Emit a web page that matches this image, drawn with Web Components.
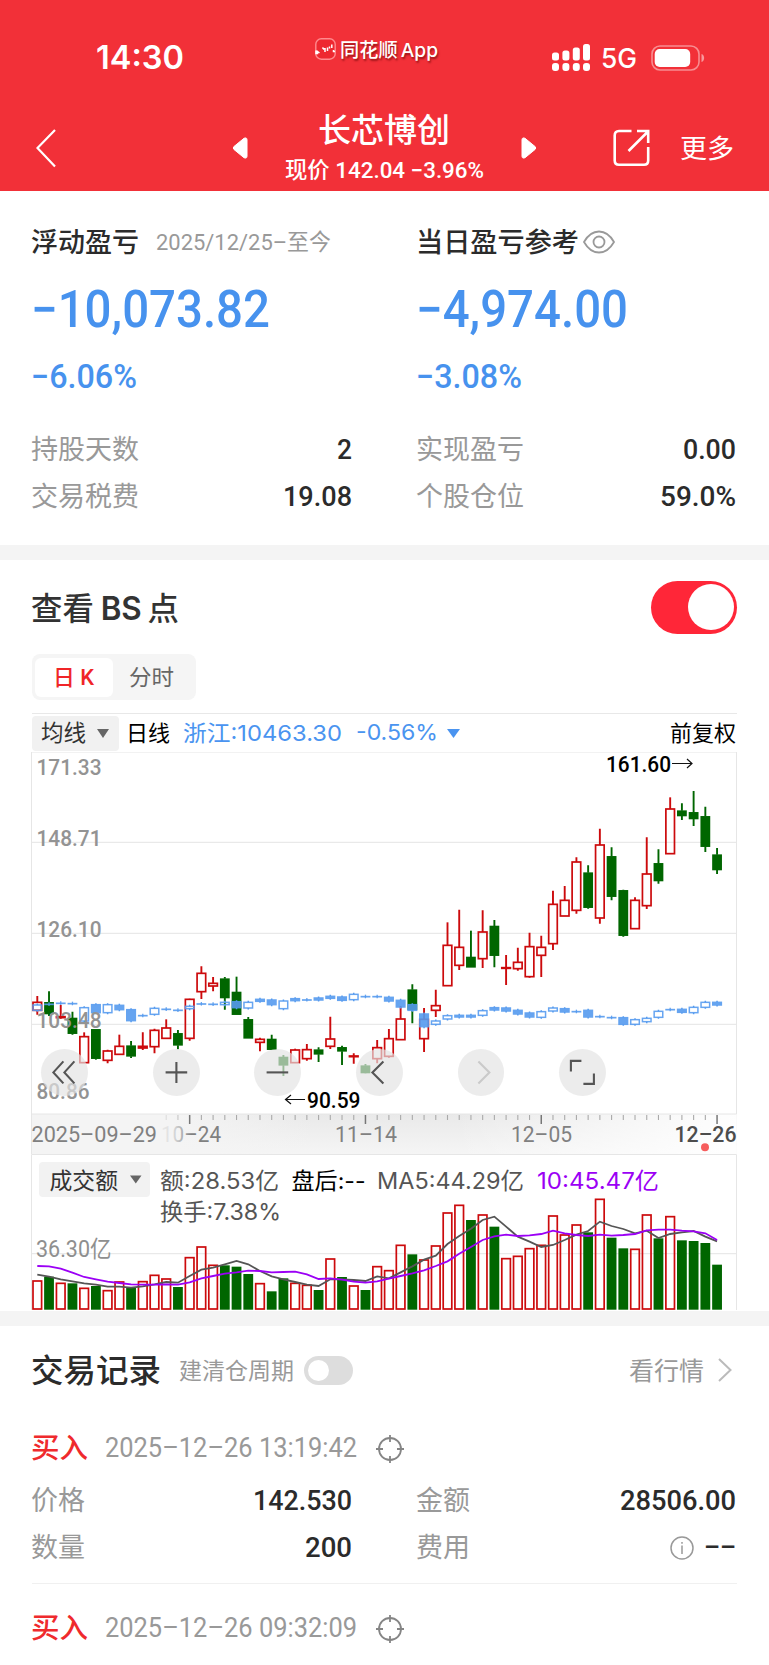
<!DOCTYPE html>
<html lang="zh-CN">
<head>
<meta charset="utf-8">
<title>长芯博创</title>
<style>
html,body{margin:0;padding:0}
body{width:769px;height:1665px;overflow:hidden;background:#fff;font-family:Roboto,"Noto Sans CJK SC",sans-serif;color:#2b2b2b}
.band{height:15px;background:#f4f4f4}
</style>
</head>
<body>
<app-header></app-header>
<profit-panel></profit-panel>
<div class="band"></div>
<chart-panel></chart-panel>
<div class="band"></div>
<trade-list></trade-list>

<script>
const define = (name, html, extra) => {
  const t = document.createElement('template');
  customElements.define(name, class extends HTMLElement {
    connectedCallback() {
      if (this.shadowRoot) return;
      this.attachShadow({mode: 'open'});
      t.innerHTML = typeof html === 'function' ? html(this) : html;
      this.shadowRoot.append(t.content.cloneNode(true));
      if (extra) extra(this);
    }
  });
};

/* One line of text stretched to a given width; Chinese glyphs sit slightly lower on the line */
define('fit-text', `<style>:host{display:block;flex:none;line-height:1;white-space:nowrap}
span{display:inline-block;transform-origin:0 50%;line-height:1}</style><span><slot></slot></span>`, el => {
  const w = +el.getAttribute('w'), s = el.shadowRoot.querySelector('span');
  el.style.width = w + 'px';
  el.style.fontSize = el.getAttribute('size') + 'px';
  if (el.hasAttribute('weight')) el.style.fontWeight = el.getAttribute('weight');
  if (el.hasAttribute('color')) el.style.color = el.getAttribute('color');
  const n = s.getBoundingClientRect().width;
  const dy = /^[\u4e00-\u9fff]/.test(el.textContent) ? 1 : 0;
  if (n) s.style.transform = `translate(-1px,${dy}px) scaleX(${w / n})`;
});

define('toggle-switch', el => {
  const on = el.hasAttribute('on');
  return `<style>:host{display:flex;align-items:center;box-sizing:border-box;flex:none;
  ${on ? 'width:86px;height:53px;border-radius:27px;background:#ff2638;justify-content:flex-end;padding:0 3px'
       : 'width:49px;height:29px;border-radius:15px;background:#ddd;padding:0 4px'}}
  i{display:block;background:#fff;border-radius:50%;width:${on ? 46 : 21}px;height:${on ? 46 : 21}px}</style><i></i>`;
});

define('stat-row', `<style>:host{display:flex;align-items:center;justify-content:space-between;height:47px}
div{display:flex;align-items:center}</style><slot name="label"></slot><div><slot></slot></div>`);

define('app-header', `<style>
:host{display:block;height:191px;background:#f23038;color:#fff}
.status{display:flex;height:96px;align-items:center;padding-left:97px;box-sizing:border-box;padding-top:20px}
.brand{display:flex;align-items:center;margin-left:130px;gap:5px;position:relative;top:-9px;text-shadow:1px 2px 2px rgba(90,0,0,.6)}
.sys{display:flex;align-items:center;margin-left:113px}
.nav{display:flex;height:95px;align-items:center}
svg{display:block;flex:none}
.mid{display:flex;flex-direction:column;align-items:center;width:200px}
</style>
<div class="status">
 <fit-text w="88" size="32.5" weight="600" style="font-family:Inter">14:30</fit-text>
 <div class="brand"><svg width="21" height="22" viewBox="0 0 21 22"><rect x=".8" y=".8" width="19.4" height="20.4" rx="5.5" fill="#ee2830" stroke="#ff8a8e" stroke-width="1.4"/><path d="M1 12.500v3h1.500v-2l2 1.500M7.500 9.500l1.500 2M10 10v4M12.500 9.500v3.500M14.500 8.500v2M16.800 6.500v3.500M18.500 12v1.500h1.500" fill="none" stroke="#fff" stroke-width="1.500"/></svg>
 <fit-text w="98" size="19" weight="500" style="font-family:Inter,'Noto Sans CJK SC',sans-serif;word-spacing:-2px">同花顺 App</fit-text></div>
 <div class="sys">
  <svg width="38" height="28" viewBox="0 0 38 28" fill="#fff"><rect x="0" y="8.500" width="7" height="8" rx="2.500"/><rect x="10.400" y="6.500" width="7" height="10" rx="2.500"/><rect x="20.800" y="3.500" width="7" height="13" rx="2.500"/><rect x="31" y="0" width="7" height="16.500" rx="2.500"/><rect x="0" y="19" width="7" height="8" rx="3"/><rect x="10.400" y="19" width="7" height="8" rx="3"/><rect x="20.800" y="19" width="7" height="8" rx="3"/><rect x="31" y="19" width="7" height="8" rx="3"/></svg>
  <fit-text w="36" size="27" weight="500" style="font-family:Inter;margin:1px 13px 0 12px">5G</fit-text>
  <svg width="54" height="26" viewBox="0 0 54 26"><rect x="1" y="1" width="47" height="24" rx="8" fill="none" stroke="#fff" stroke-opacity=".45" stroke-width="1.600"/><rect x="3.700" y="4" width="35.500" height="18" rx="5" fill="#fff"/><path d="M50.500 9c3.500 1 3.500 7 0 8z" fill="#fff" opacity=".5"/></svg>
 </div>
</div>
<div class="nav">
 <svg style="margin:8px 0 0 36px" width="20" height="40" viewBox="0 0 20 40"><path d="M19 2L1.500 20L19 38.500" fill="none" stroke="#fff" stroke-width="2.200"/></svg>
 <svg style="margin:9px 0 0 176px" width="17" height="24" viewBox="0 0 17 24"><path d="M2 10.500L12 2.300Q15 1 15 4v16q0 3-3 1.700L2 13.500Q.5 12 2 10.500z" fill="#fff" stroke="#fff"/></svg>
 <div class="mid" style="margin:6px 0 0 36px">
  <fit-text w="132" size="33" weight="500">长芯博创</fit-text>
  <fit-text w="199" size="22.500" weight="500" style="margin-top:12px">现价 142.04 −3.96%</fit-text>
 </div>
 <svg style="margin:9px 0 0 35px" width="17" height="24" viewBox="0 0 17 24"><path transform="matrix(-1 0 0 1 17 0)" d="M2 10.500L12 2.300Q15 1 15 4v16q0 3-3 1.700L2 13.500Q.5 12 2 10.500z" fill="#fff" stroke="#fff"/></svg>
 <svg style="margin:9px 0 0 76px" width="37" height="38" viewBox="0 0 37 38"><path d="M18.500 2H6Q1.700 2 1.700 6.500v25Q1.700 35.700 6 35.700h25q4.200 0 4.200-4.200V18M24 2h11.200v12M35 2.500L15.500 22" fill="none" stroke="#fff" stroke-width="2.600"/></svg>
 <fit-text w="54" size="26.500" style="margin:10px 0 0 31px">更多</fit-text>
</div>`);

define('profit-panel', `<style>
:host{display:grid;grid-template-columns:321px 320px;column-gap:64px;padding:29px 0 25px 32px;height:354px;box-sizing:border-box}
.h{display:flex;height:44px;align-items:center}.b{display:flex;height:89px;align-items:center;padding-top:2px;box-sizing:border-box}.p{display:flex;height:46px;align-items:center;margin-bottom:27px}
svg{margin-left:3px}
</style>
<div><div class="h"><fit-text w="108" size="27" weight="500">浮动盈亏</fit-text><fit-text w="175" size="22.500" color="#999" style="margin-left:17px">2025/12/25–至今</fit-text></div>
<div class="b"><fit-text w="239" size="51" weight="500" color="#4792ee">−10,073.82</fit-text></div>
<div class="p"><fit-text w="106" size="33" weight="500" color="#4792ee">−6.06%</fit-text></div>
<stat-row><fit-text slot="label" w="108" size="27" color="#999">持股天数</fit-text><fit-text w="15" size="28" weight="500">2</fit-text></stat-row>
<stat-row><fit-text slot="label" w="108" size="27" color="#999">交易税费</fit-text><fit-text w="69" size="28" weight="500">19.08</fit-text></stat-row></div>
<div><div class="h"><fit-text w="163" size="27" weight="500">当日盈亏参考</fit-text><svg width="32" height="24" viewBox="0 0 32 24" fill="none" stroke="#999" stroke-width="1.800"><path d="M1 12Q7 1.500 16 1.500T31 12Q25 22.500 16 22.500T1 12z"/><circle cx="16" cy="12" r="5.500"/></svg></div>
<div class="b"><fit-text w="212" size="51" weight="500" color="#4792ee">−4,974.00</fit-text></div>
<div class="p"><fit-text w="106" size="33" weight="500" color="#4792ee">−3.08%</fit-text></div>
<stat-row><fit-text slot="label" w="108" size="27" color="#999">实现盈亏</fit-text><fit-text w="53" size="28" weight="500">0.00</fit-text></stat-row>
<stat-row><fit-text slot="label" w="108" size="27" color="#999">个股仓位</fit-text><fit-text w="76" size="28" weight="500">59.0%</fit-text></stat-row></div>`);

/* Candle table: colour, high, body top, body bottom, low (thirds of a pixel below y=740) */
const K = `r768,787,811,824 g754,787,822,828 r795,830,833,836 g815,834,881,884 r877,890,968,968 g868,868,956,959 r929,933,961,970 r884,919,943,943 g903,917,949,954 r877,919,924,930 r866,871,920,940 r838,864,895,895 g870,880,916,928 r776,778,895,902 r679,700,755,777 r711,730,738,754 g711,716,774,809 g710,756,824,824 g831,838,895,895 r893,898,907,934 g884,897,929,930 g945,951,976,1008 r926,930,968,968 r912,929,956,962 g922,929,943,966 r830,897,919,927 g917,922,934,975 r940,948,950,971 g972,977,999,1000 r900,923,956,970 r867,896,949,953 r798,837,899,899 g733,749,809,850 r804,838,896,936 r749,797,811,831 r547,616,737,737 r509,622,676,690 g572,651,682,682 r511,576,656,684 g540,558,647,682 r645,683,685,735 r623,667,686,692 r578,620,710,713 r587,622,646,711 r452,493,611,630 r438,481,528,528 r352,366,511,521 g376,398,503,506 r266,315,534,551 g322,349,470,481 g449,451,587,590 r472,481,566,566 r292,402,497,507 g328,370,423,431 r172,207,341,341 g190,212,228,240 g153,217,237,258 g200,229,320,336 g324,344,390,402`.split(' ');
const B = `h795,811 t793 t790 t791 h803,843 f794,818 h794,818 f796,809 f809,842 t827 h805,823 t808 t811 h799,806 t792 t793 h787,794 f785,803 h787,804 f778,784 f780,794 h783,806 f776,782 t780 f774,780 f769,775 f771,781 h763,779 t770 t770 f772,783 f781,801 f794,811 f822,860 h843,853 h827,837 f826,831 f826,831 h812,826 f803,810 f804,813 f811,822 f819,831 h815,832 h804,813 f806,816 t815 f811,831 t830 t833 f833,853 h839,853 h835,845 h814,832 t809 f808,817 h802,818 h787,802 f787,795`.split(' ');
const V = `423,410,430,430,445,438,452,426,443,425,406,417,441,353,321,376,376,380,402,431,454,415,430,436,450,357,411,438,450,380,392,316,343,360,318,219,196,240,225,260,356,349,326,316,228,285,255,277,178,293,325,328,225,295,230,301,303,309,374`.split(',');
const M5 = `404,410,418,424,430,434,440,440,443,439,433,426,428,408,389,383,373,363,373,393,409,418,426,434,438,418,418,420,423,409,415,397,379,359,347,312,288,266,240,230,260,290,305,321,315,300,284,273,245,258,267,280,272,294,282,277,273,290,304`.split(',');
const M10 = `378,379,386,398,411,418,425,429,433,434,434,433,434,427,415,408,401,397,392,393,397,396,395,403,417,415,419,425,428,424,416,408,400,391,378,364,341,321,300,289,284,288,286,282,272,280,285,288,284,287,285,282,271,269,269,272,274,280,300`.split(',');
/* Volume bar colours, one letter a day */
const VC = 'rgrgrgrrgrrrgrrrgggrggrrgrgrgrrrgrrrrgrgrrrrrrrgrggrrgrgggg';
const X = i => 37.3 + 11.72 * i;
const RED = '#cc0a0c', GREEN = '#006600', BLUE = '#569bef';
const T = (x, y, w, s, c, t, wt = 400) => `<text x="${x}" y="${y}" textLength="${w}" lengthAdjust="spacingAndGlyphs" font-size="${s}" fill="${c}" font-weight="${wt}">${t}</text>`;

define('price-chart', () => {
  const Y = z => 740 + z / 3;
  let s = '';
  [842.3, 933.3, 1024.3].forEach(y => s += `<path d="M31 ${y}H737" stroke="#e9e9e9" stroke-width="1.200"/>`);
  K.forEach((k, i) => {
    const c = k[0] === 'r' ? RED : GREEN, [h, a, b, l] = k.slice(1).split(',').map(v => Y(+v)), x = X(i);
    s += `<path d="M${x} ${h}V${a}M${x} ${b}V${l}" stroke="${c}" stroke-width="1.900"/>`;
    s += k[0] === 'r'
      ? `<rect x="${x - 4.3}" y="${a}" width="8.600" height="${Math.max(b - a, .4)}" fill="none" stroke="${c}" stroke-width="1.700"/>`
      : `<rect x="${x - 4.9}" y="${a - .3}" width="9.800" height="${b - a + .6}" fill="${c}"/>`;
  });
  B.forEach((k, i) => {
    const [a, b] = k.slice(1).split(',').map(v => Y(+v)), x = X(i);
    if (k[0] === 't') s += `<path d="M${x - 4.900} ${a}h9.800" stroke="${BLUE}" stroke-width="1.700" opacity=".9"/><path d="M${x} ${a - 2}v3.600" stroke="${BLUE}" stroke-width="1.300" opacity=".9"/>`;
    else s += `<rect x="${x - 4.300}" y="${a}" width="8.600" height="${b - a}" fill="${k[0] === 'f' ? BLUE : 'none'}" stroke="${BLUE}" stroke-width="1.500" opacity=".9"/><path d="M${x} ${a - 1.500}V${a}M${x} ${b}v1.500" stroke="${BLUE}" stroke-width="1.500"/>`;
  });
  [['171.33', 774.5, 65], ['148.71', 845.5, 65], ['126.10', 936.8, 65], ['103.48', 1027.5, 65], ['80.86', 1098.8, 53]].forEach(([t, y, w]) => s += T(36.5, y, w, 22.800, '#939393', t, 500));
  s += T(606, 772, 65, 22.500, '#000', '161.60', 500) + T(307, 1108, 53.500, 22.500, '#000', '90.59', 500);
  s += `<path d="M672 763.500H692M687 759l5 4.500-5 4.500M305 1099.500H285.500M291 1095l-5.500 4.500 5.500 4.500" fill="none" stroke="#111" stroke-width="1.200"/>`;
  s += `<rect x="31.500" y="1114" width="705" height="40" fill="url(#v)"/><rect x="31.500" y="1114" width="705" height="40" fill="url(#h)"/>`;
  for (let i = 11; i < 59; i++) {
    const big = (i - 13) % 15 === 0;
    s += `<path d="M${X(i)} 1115v${big ? 9 : 5}" stroke="${big ? '#777' : '#aaa'}" stroke-width="${big ? 1.500 : 1.100}" opacity="${i === 11 ? .3 : i === 12 ? .6 : 1}"/>`;
  }
  s += T(31.500, 1142, 125.500, 22.800, '#808080', '2025–09–29') + T(161, 1142, 60, 22.800, 'url(#f)', '10–24') + T(335, 1142, 62, 22.800, '#808080', '11–14') + T(511, 1142, 61, 22.800, '#808080', '12–05') + T(674.500, 1142, 62, 22.800, '#4d4d4d', '12–26', 500);
  s += `<circle cx="705" cy="1147.300" r="4" fill="#f65d5d"/><path d="M31.500 1154V752H736.500V1114H31.500" fill="none" stroke="#e6e6e6"/>`;
  const icons = ['M-1 -11L-11 0L-1 11M10 -11L0 0L10 11', 'M-10.800 0H10.800M0 -10.500V10.500', 'M-10.800 0H10.800', 'M4 -11L-7 0L4 11', 'M-3 -11L8 0L-3 11', 'M-11.500 -1V-11.500H-1M11.500 1V11.500H1'];
  return `<style>:host{display:block;position:relative;height:402px;width:769px}svg{display:block}
  nav{position:absolute;left:41px;top:297px;display:flex;gap:54.8px}
  nav i{display:block;width:46.8px;height:46.8px;border-radius:50%;background:rgba(227,227,227,.68)}nav i:first-child{margin-right:10.2px}</style>
  <svg width="769" height="402" viewBox="0 752 769 402"><defs>
  <linearGradient id="v" x2="0" y2="1"><stop stop-color="#e9e9e9"/><stop offset="1" stop-color="#f5f5f5"/></linearGradient>
  <linearGradient id="h"><stop stop-color="#f4f4f4"/><stop offset=".2" stop-color="#f4f4f4"/><stop offset=".4" stop-color="#f4f4f4" stop-opacity="0"/><stop offset=".6" stop-color="#fff" stop-opacity="0"/><stop offset="1" stop-color="#fff" stop-opacity=".95"/></linearGradient>
  <linearGradient id="f"><stop stop-color="#808080" stop-opacity=".1"/><stop offset=".2" stop-color="#808080" stop-opacity=".2"/><stop offset=".4" stop-color="#808080" stop-opacity=".7"/><stop offset=".5" stop-color="#808080"/></linearGradient></defs>${s}</svg>
  <nav>${icons.map((d, i) => `<i><svg width="46.800" height="46.800" viewBox="-23.400 -23.400 46.800 46.800"><path d="${d}" fill="none" stroke="${i === 4 ? '#cacaca' : '#555'}" stroke-width="2.100"/></svg></i>`).join('')}</nav>`;
});

define('volume-chart', () => {
  const Y = z => 1140 + z / 3;
  let s = `<path d="M31 1253.700H737" stroke="#e9e9e9" stroke-width="1.200"/><path d="M31.500 1310V1154.500H736.500V1310" fill="none" stroke="#e6e6e6"/>`;
  V.forEach((z, i) => {
    const y = Y(+z), x = X(i);
    s += VC[i] === 'r' ? `<rect x="${x - 4.300}" y="${y}" width="8.600" height="${1309 - y}" fill="none" stroke="${RED}" stroke-width="1.700"/>`
      : `<rect x="${x - 4.900}" y="${y}" width="9.800" height="${1309.700 - y}" fill="${GREEN}"/>`;
  });
  [[M5, '#555'], [M10, '#9b00f5']].forEach(([m, c]) => s += `<polyline points="${m.map((z, i) => X(i) + ',' + Y(+z)).join(' ')}" fill="none" stroke="${c}" stroke-width="1.800"/>`);
  s += T(36, 1257, 75.500, 23, '#8f8f8f', '36.30亿');
  s += `<rect x="39" y="1162" width="111" height="35" rx="4" fill="#f2f2f2"/><path d="M130 1175.500h11.500l-5.700 8z" fill="#666"/>`;
  s += T(49.500, 1189, 68.500, 22.500, '#333', '成交额');
  s += `<g style="font-family:Inter,'Noto Sans CJK SC',sans-serif">` + T(160, 1189, 119, 22.500, '#555', '额:28.53亿') + T(291.500, 1189, 74, 22.500, '#000', '盘后:--') + T(377, 1189, 147, 22.500, '#555', 'MA5:44.29亿') + T(537, 1189, 122, 22.500, '#9b00f5', '10:45.47亿') + T(160, 1220, 121, 22.500, '#555', '换手:7.38%') + '</g>';
  return `<style>:host{display:block;height:157px}svg{display:block}</style><svg width="769" height="157" viewBox="0 1154 769 157">${s}</svg>`;
});

define('chart-panel', `<style>
:host{display:block;height:751px}
.head{display:flex;align-items:center;justify-content:space-between;height:94px;padding:0 32px}
.head b{font-weight:600;margin:0 6px 0 7px}
.tabs{display:flex;width:164px;height:46px;margin:0 0 13px 32px;background:#f5f5f5;border-radius:8px;align-items:center;box-sizing:border-box;padding:0 3px}
.tabs div{width:78px;height:39px;background:#fff;border-radius:6px;display:flex;align-items:center;justify-content:center;margin-right:17px}
.bar{display:flex;align-items:center;height:38px;margin:0 32px 0 31.5px;border-top:1px solid #e8e8e8;font-family:Inter,"Noto Sans CJK SC",sans-serif}
.bar fit-text{position:relative;top:-1px}
.ma{display:flex;align-items:center;width:87px;height:35px;box-sizing:border-box;padding-left:10px;background:#f1f1f1;border-radius:4px}
</style>
<div class="head"><fit-text w="148" size="32" weight="500" color="#333" style="padding-top:1px;font-family:Inter,'Noto Sans CJK SC',sans-serif">查看<b>BS</b>点</fit-text><toggle-switch on></toggle-switch></div>
<div class="tabs"><div><fit-text w="41" size="22" weight="500" color="#f02528">日 K</fit-text></div><fit-text w="45" size="22" color="#666">分时</fit-text></div>
<div class="bar"><div class="ma"><fit-text w="45" size="22.500" color="#333">均线</fit-text><svg width="12" height="9" style="margin-left:10px"><path d="M0 0h12l-6 9z" fill="#666"/></svg></div>
<fit-text w="44" size="22" color="#000" style="margin-left:8px">日线</fit-text>
<fit-text w="159" size="22" color="#4a94f0" style="margin-left:13px">浙江:10463.30</fit-text>
<fit-text w="82" size="22" color="#4a94f0" style="margin-left:14px">-0.56%</fit-text>
<svg width="13" height="9" style="margin-left:8px"><path d="M0 0h13l-6.500 9z" fill="#4a94f0"/></svg>
<fit-text w="66" size="22" color="#000" style="margin-left:auto">前复权</fit-text></div>
<price-chart></price-chart><volume-chart></volume-chart>`);

define('trade-record', `<style>
:host{display:block;padding-bottom:12px;border-bottom:1px solid #f0f0f0;margin:0 32px}
.t{display:flex;height:58px;align-items:center}
::slotted([slot=time]){margin-left:17px}
svg{margin:1px 0 0 18px}
</style>
<div class="t"><fit-text w="57" size="28" weight="500" color="#ef2a2d">买入</fit-text><slot name="time"></slot>
<svg width="28" height="28" viewBox="-14 -14 28 28" fill="none" stroke="#858585" stroke-width="1.800"><circle r="11"/><path d="M0-14v7M0 14v-7M-14 0h7M14 0h-7"/></svg></div>
<slot></slot>`);

define('trade-list', `<style>
:host{display:block;height:339px;overflow:hidden}
.head{display:flex;height:88px;align-items:center;padding:0 32px}
.g{display:grid;grid-template-columns:321px 320px;column-gap:64px}
</style>
<div class="head"><fit-text w="130" size="32" weight="500">交易记录</fit-text><fit-text w="115" size="23" color="#999" style="margin:0 9px 0 18px">建清仓周期</fit-text><toggle-switch></toggle-switch>
<fit-text w="75" size="25" color="#999" style="margin-left:auto">看行情</fit-text><svg width="14" height="24" style="margin:0 5px 0 13px"><path d="M1 1l11.500 11L1 23" fill="none" stroke="#bbb" stroke-width="2"/></svg></div>
<trade-record style="padding-top:5px"><fit-text slot="time" w="252" size="27" color="#999">2025–12–26 13:19:42</fit-text>
<div class="g">
<stat-row><fit-text slot="label" w="54" size="27" color="#999">价格</fit-text><fit-text w="99" size="28" weight="500">142.530</fit-text></stat-row>
<stat-row><fit-text slot="label" w="54" size="27" color="#999">金额</fit-text><fit-text w="116" size="28" weight="500">28506.00</fit-text></stat-row>
<stat-row><fit-text slot="label" w="54" size="27" color="#999">数量</fit-text><fit-text w="47" size="28" weight="500">200</fit-text></stat-row>
<stat-row><fit-text slot="label" w="54" size="27" color="#999">费用</fit-text><svg width="24" height="24" viewBox="-12 -12 24 24" style="margin-right:11px" fill="none" stroke="#999" stroke-width="1.500"><circle r="11"/><path d="M0-2.500V6M0-6v1.800"/></svg><fit-text w="32" size="28" weight="500">––</fit-text></stat-row>
</div></trade-record>
<trade-record style="padding-top:15px"><fit-text slot="time" w="252" size="27" color="#999">2025–12–26 09:32:09</fit-text></trade-record>`);
</script>
</body>
</html>
